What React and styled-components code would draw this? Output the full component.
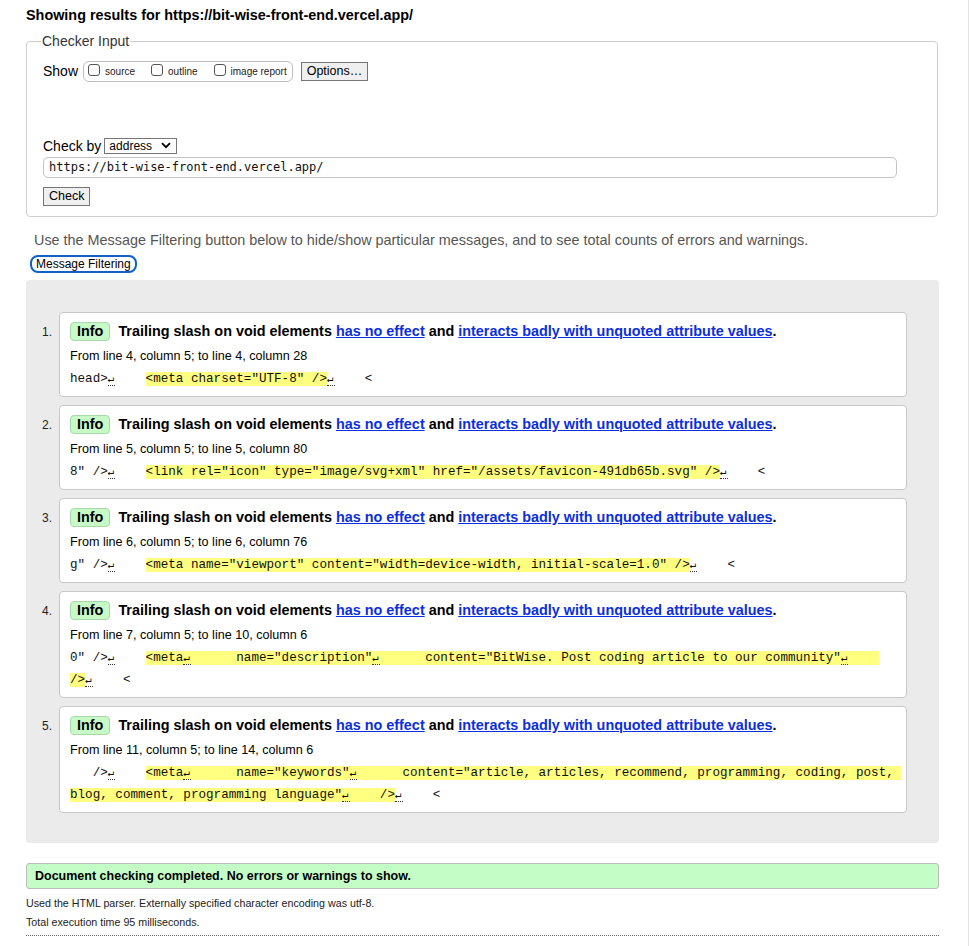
import styled, { createGlobalStyle } from "styled-components";

const GlobalStyle = createGlobalStyle`
  html, body {
    margin: 0;
    padding: 0;
    background: #fff;
  }
  body {
    font-family: "Liberation Sans", Arial, Helvetica, sans-serif;
    color: #000;
  }
`;

const messages = [
  {
    from: "From line 4, column 5; to line 4, column 28",
    rows: [["head>↵    ", '<meta charset="UTF-8" />', "↵    <"]],
  },
  {
    from: "From line 5, column 5; to line 5, column 80",
    rows: [
      [
        '8" />↵    ',
        '<link rel="icon" type="image/svg+xml" href="/assets/favicon-491db65b.svg" />',
        "↵    <",
      ],
    ],
  },
  {
    from: "From line 6, column 5; to line 6, column 76",
    rows: [
      [
        'g" />↵    ',
        '<meta name="viewport" content="width=device-width, initial-scale=1.0" />',
        "↵    <",
      ],
    ],
  },
  {
    from: "From line 7, column 5; to line 10, column 6",
    rows: [
      [
        '0" />↵    ',
        '<meta↵      name="description"↵      content="BitWise. Post coding article to our community"↵    ',
        "",
      ],
      ["", "/>", "↵    <"],
    ],
  },
  {
    from: "From line 11, column 5; to line 14, column 6",
    rows: [
      [
        "   />↵    ",
        '<meta↵      name="keywords"↵      content="article, articles, recommend, programming, coding, post, ',
        "",
      ],
      ["", 'blog, comment, programming language"↵    />', "↵    <"],
    ],
  },
];

// splits a chunk of source on the return marker so each one gets its dotted underline
const withReturns = (text) =>
  text.split("↵").flatMap((part, i) =>
    i === 0 ? [part] : [<Ret key={i}>↵</Ret>, part]
  );

const App = () => {
  return (
    <Page>
      <GlobalStyle />
      <Heading>Showing results for https://bit-wise-front-end.vercel.app/</Heading>

      <Fieldset>
        <Legend>Checker Input</Legend>
        <ShowRow>
          <span>Show</span>
          <CheckGroup>
            <CheckLabel>
              <Box />
              source
            </CheckLabel>
            <CheckLabel>
              <Box />
              outline
            </CheckLabel>
            <CheckLabel>
              <Box />
              image report
            </CheckLabel>
          </CheckGroup>
          <Button>Options…</Button>
        </ShowRow>

        <CheckByRow>
          <span>Check by</span>
          <Select>
            address
            <svg width="10" height="7" viewBox="0 0 10 7">
              <path d="M1 1.2 L5 5.2 L9 1.2" fill="none" stroke="#000" strokeWidth="1.8" />
            </svg>
          </Select>
        </CheckByRow>
        <UrlInput>https://bit-wise-front-end.vercel.app/</UrlInput>
        <Button $top={9}>Check</Button>
      </Fieldset>

      <Hint>
        Use the Message Filtering button below to hide/show particular messages, and to
        see total counts of errors and warnings.
      </Hint>
      <FilterButton>Message Filtering</FilterButton>

      <Results>
        {messages.map((msg, index) => (
          <Item key={index}>
            <Num>{index + 1}.</Num>
            <Card>
              <TitleRow>
                <Badge>Info</Badge>
                <Title>
                  Trailing slash on void elements <Link>has no effect</Link> and{" "}
                  <Link>interacts badly with unquoted attribute values</Link>.
                </Title>
              </TitleRow>
              <Location>{msg.from}</Location>
              <Code>
                {msg.rows.map((row, r) => (
                  <CodeRow key={r}>
                    {withReturns(row[0])}
                    {row[1] && <Mark>{withReturns(row[1])}</Mark>}
                    {withReturns(row[2])}
                  </CodeRow>
                ))}
              </Code>
            </Card>
          </Item>
        ))}
      </Results>

      <Success>Document checking completed. No errors or warnings to show.</Success>
      <Details>
        <p>Used the HTML parser. Externally specified character encoding was utf-8.</p>
        <p>Total execution time 95 milliseconds.</p>
      </Details>
    </Page>
  );
};

export default App;

const Page = styled.div`
  box-sizing: border-box;
  width: 969px;
  min-height: 100vh;
  padding: 6px 30px 12px 26px;
  border-right: 1px solid #e3e3e3;
`;

const Heading = styled.h2`
  margin: 0 0 9px;
  font-size: 14.4px;
  line-height: 18px;
  font-weight: bold;
`;

const Fieldset = styled.fieldset`
  margin: 0;
  padding: 0 16px 10px;
  width: 912px;
  box-sizing: border-box;
  border: 1px solid #cdcdcd;
  border-radius: 4px;
  font-size: 14px;
`;

const Legend = styled.legend`
  padding: 0 1px;
  margin-left: -2px;
  font-size: 14px;
  line-height: 16px;
  color: #333;
`;

const ShowRow = styled.div`
  display: flex;
  align-items: center;
  height: 20px;
  margin-top: 12px;
  span {
    margin-right: 5px;
  }
`;

const CheckGroup = styled.div`
  display: flex;
  align-items: center;
  height: 19px;
  padding: 0 5px 0 4px;
  border: 1px solid #bdbdbd;
  border-radius: 6px;
  gap: 16px;
  margin-right: 8px;
`;

const CheckLabel = styled.label`
  display: flex;
  align-items: center;
  font-size: 10px;
  color: #222;
`;

const Box = styled.span`
  box-sizing: border-box;
  flex: none;
  width: 12px;
  height: 12px;
  margin: -2px 1px 0 0;
  border: 1px solid #555;
  border-radius: 3px;
  background: #fff;
`;

const Button = styled.button`
  display: block;
  margin-top: ${(p) => p.$top || 0}px;
  height: 19px;
  padding: 0 5px;
  font-family: "Liberation Sans", Arial, sans-serif;
  font-size: 12.5px;
  line-height: 17px;
  color: #000;
  background: #efefef;
  border: 1px solid #767676;
  border-radius: 0;
`;

const CheckByRow = styled.div`
  display: flex;
  align-items: center;
  margin-top: 56px;
  height: 17px;
  span {
    margin-right: 3px;
  }
`;

const Select = styled.div`
  display: flex;
  align-items: center;
  justify-content: space-between;
  box-sizing: border-box;
  width: 73px;
  height: 16px;
  padding: 0 5px 0 4px;
  border: 1px solid #767676;
  font-size: 12px;
  background: #fff;
`;

const UrlInput = styled.div`
  box-sizing: border-box;
  width: 854px;
  height: 21px;
  margin-top: 3px;
  padding: 0 5px;
  border: 1px solid #c4c4c4;
  border-radius: 5px;
  font-family: "DejaVu Sans Mono", monospace;
  font-size: 12px;
  line-height: 19px;
  color: #111;
`;

const Hint = styled.p`
  margin: 14px 0 0 8px;
  font-size: 14.4px;
  line-height: 18px;
  color: #555;
`;

const FilterButton = styled.button`
  display: block;
  margin: 6px 0 0 4px;
  height: 18px;
  padding: 0 4px;
  font-family: "Liberation Sans", Arial, sans-serif;
  font-size: 12px;
  line-height: 14px;
  color: #000;
  background: #fff;
  border: 2px solid #1060c8;
  border-radius: 8px;
`;

const Results = styled.ol`
  list-style: none;
  margin: 7px 0 0;
  width: 913px;
  box-sizing: border-box;
  padding: 32px 32px 30px 0;
  background: #ebebeb;
  border-radius: 4px;
  display: flex;
  flex-direction: column;
  gap: 8px;
`;

const Item = styled.li`
  display: grid;
  grid-template-columns: 33px minmax(0, 1fr);
`;

const Num = styled.span`
  padding: 10px 7px 0 0;
  text-align: right;
  font-size: 12px;
  line-height: 20px;
  color: #222;
`;

const Card = styled.div`
  min-width: 0;
  background: #fff;
  border: 1px solid #c8c8c8;
  border-radius: 4px;
  padding: 8px 10px 6px;
`;

const TitleRow = styled.div`
  display: flex;
  align-items: center;
  height: 20px;
`;

const Badge = styled.span`
  box-sizing: border-box;
  height: 19px;
  padding: 0 6px;
  font-size: 14.4px;
  font-weight: bold;
  line-height: 17px;
  background: #c8fac8;
  border: 1px solid #a9d8a9;
  border-radius: 4px;
  margin-right: 8px;
`;

const Title = styled.p`
  margin: 0;
  font-size: 14.4px;
  font-weight: bold;
  line-height: 20px;
  white-space: nowrap;
`;

const Link = styled.a`
  color: #0b2ee0;
  text-decoration: underline;
  cursor: pointer;
`;

const Location = styled.p`
  margin: 5px 0 0;
  font-size: 12.6px;
  line-height: 20px;
`;

const Code = styled.div`
  margin-top: 2px;
  font-family: "Liberation Mono", "Courier New", monospace;
  font-size: 12.6px;
  line-height: 22px;
  color: #111;
`;

const CodeRow = styled.div`
  white-space: pre;
`;

const Mark = styled.span`
  background: #ffff80;
`;

const Ret = styled.span`
  border-bottom: 1px dotted #333;
  font-size: 11px;
  display: inline-block;
  width: 7.56px;
  line-height: 11px;
  vertical-align: baseline;
`;

const Success = styled.div`
  box-sizing: border-box;
  width: 913px;
  height: 26px;
  margin-top: 20px;
  padding: 0 8px;
  font-size: 12.5px;
  font-weight: bold;
  line-height: 24px;
  background: #c5fdc6;
  border: 1px solid #bcbcbc;
  border-radius: 3px;
`;

const Details = styled.div`
  width: 913px;
  margin-top: 5px;
  padding-bottom: 3px;
  border-bottom: 1px dotted #666;
  p {
    margin: 0;
    font-size: 10.7px;
    line-height: 19px;
    color: #222;
  }
`;
